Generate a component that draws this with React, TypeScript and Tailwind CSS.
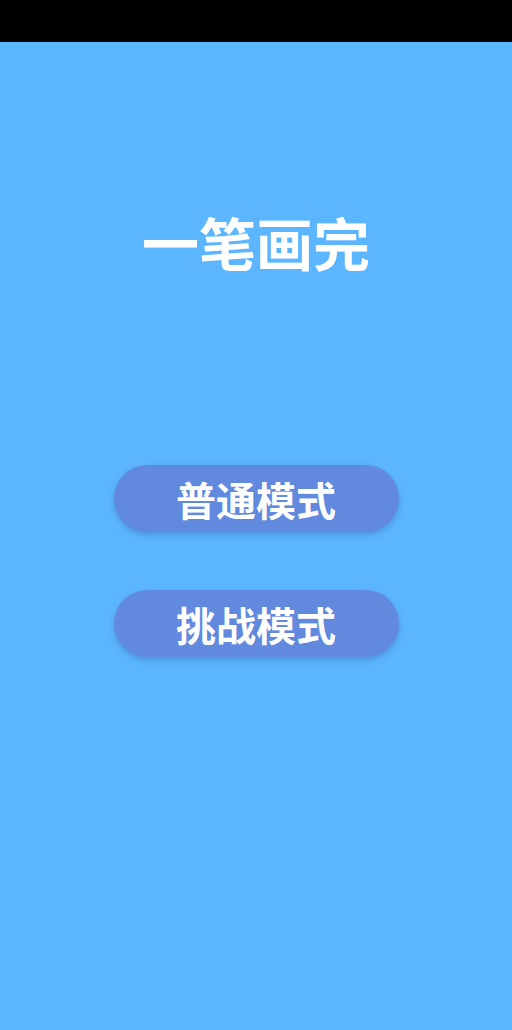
export default function App() {
  const font = { fontFamily: '"Noto Sans CJK SC", "Noto Sans", sans-serif' };
  return (
    <div className="flex h-[1030px] w-[512px] flex-col bg-[#5cb6ff]" style={font}>
      {/* status bar */}
      <div className="h-[42px] w-full bg-black" />

      <div className="flex flex-1 flex-col items-center pt-[171px]">
        <h1 className="text-[57px] font-bold leading-[56px] text-white">一笔画完</h1>

        <div className="mt-[196px] flex flex-col items-center gap-[58px]">
          <button className="flex h-[67px] w-[285px] items-center justify-center rounded-full bg-[#6189de] text-[40px] font-bold text-white shadow-[0_3px_6px_rgba(40,70,140,0.3)]">
            普通模式
          </button>
          <button className="flex h-[67px] w-[285px] items-center justify-center rounded-full bg-[#6189de] text-[40px] font-bold text-white shadow-[0_3px_6px_rgba(40,70,140,0.3)]">
            挑战模式
          </button>
        </div>
      </div>
    </div>
  );
}
